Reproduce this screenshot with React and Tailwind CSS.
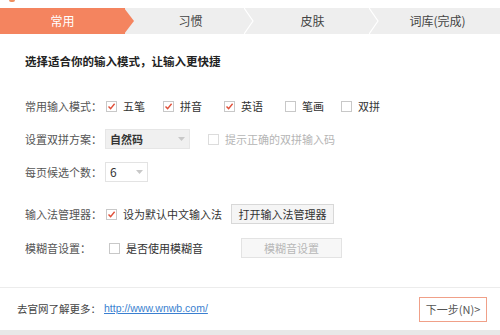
import React from "react";

const font = { fontFamily: '"Noto Sans CJK SC", "Liberation Sans", sans-serif' };

function Box({ checked, disabled }) {
  return (
    <span
      className={`inline-flex items-center justify-center w-[11px] h-[11px] border bg-white ${
        disabled ? "border-[#dcdcdc]" : "border-[#c8c8c8]"
      }`}
    >
      {checked && (
        <svg width="9" height="9" viewBox="0 0 9 9">
          <path d="M1.5 4.5 L3.6 6.6 L7.6 1.8" fill="none" stroke="#e0503a" strokeWidth="1.4" />
        </svg>
      )}
    </span>
  );
}

function Check({ label, checked, disabled, className = "" }) {
  return (
    <span className={`flex items-center gap-[6px] ${className}`}>
      <Box checked={checked} disabled={disabled} />
      <span className={disabled ? "text-[#b5b5b5]" : "text-[#333]"}>{label}</span>
    </span>
  );
}

function Caret() {
  return (
    <svg width="7" height="4" viewBox="0 0 7 4">
      <path d="M0 0 L3.5 4 L7 0 Z" fill="#c8c8c8" />
    </svg>
  );
}

export default function App() {
  const tabs = ["习惯", "皮肤", "词库(完成)"];

  return (
    <div className="w-[500px] h-[335px] bg-white text-[11px] text-[#333] flex flex-col relative" style={font}>
      {/* scrap of window icon at the top edge */}
      <span className="absolute left-[9px] top-0 w-[6px] h-[2px] bg-[#f09060] rounded-b-[2px]" />

      {/* tab bar */}
      <div className="mt-[8px] h-[26px] flex bg-[#eeeeee]">
        <div className="relative w-[125px] bg-[#f4845f] flex items-center justify-center text-white text-[12px]">
          常用
          <svg className="absolute left-[124px] top-0" width="10" height="26" viewBox="0 0 10 26">
            <path d="M0 0 L10 13 L0 26 Z" fill="#f4845f" />
          </svg>
        </div>
        {tabs.map((t, i) => (
          <div key={t} className="relative w-[125px] flex items-center justify-center text-[#444] text-[12px]">
            <span className={i === 0 ? "ml-[6px]" : ""}>{t}</span>
            {i < 2 && (
              <svg className="absolute right-[-4px] top-0" width="10" height="26" viewBox="0 0 10 26">
                <path d="M0 0 L9 13 L0 26" fill="none" stroke="#ffffff" strokeWidth="1.2" />
              </svg>
            )}
          </div>
        ))}
      </div>

      {/* body */}
      <div className="pl-[25px] flex flex-col">
        <div className="mt-[19px] font-bold text-[11.5px] text-[#222]">选择适合你的输入模式，让输入更快捷</div>

        <div className="mt-[26px] h-[20px] flex items-center">
          <span className="w-[81px] text-[#555]">常用输入模式：</span>
          <Check label="五笔" checked className="w-[57px]" />
          <Check label="拼音" checked className="w-[61px]" />
          <Check label="英语" checked className="w-[61px]" />
          <Check label="笔画" className="w-[56px]" />
          <Check label="双拼" />
        </div>

        <div className="mt-[13px] h-[20px] flex items-center">
          <span className="w-[80px] text-[#555]">设置双拼方案：</span>
          <div className="w-[85px] h-[20px] bg-[#f0f0f0] border border-[#e6e6e6] flex items-center justify-between px-[4px]">
            <span className="font-bold text-[#333]">自然码</span>
            <Caret />
          </div>
          <Check label="提示正确的双拼输入码" disabled className="ml-[18px]" />
        </div>

        <div className="mt-[13px] h-[20px] flex items-center">
          <span className="w-[80px] text-[#555]">每页候选个数：</span>
          <div className="w-[43px] h-[20px] bg-white border border-[#e3e3e3] flex items-center justify-between px-[4px]">
            <span className="text-[#333] text-[12px]">6</span>
            <Caret />
          </div>
        </div>

        <div className="mt-[22px] h-[20px] flex items-center">
          <span className="w-[81px] text-[#555]">输入法管理器：</span>
          <Check label="设为默认中文输入法" checked />
          <button className="ml-[9px] w-[103px] h-[20px] border border-[#d8d8d8] bg-[#f5f5f5] text-[#333] text-[11px]">
            打开输入法管理器
          </button>
        </div>

        <div className="mt-[14px] h-[20px] flex items-center">
          <span className="w-[84px] text-[#555]">模糊音设置：</span>
          <Check label="是否使用模糊音" />
          <button className="ml-[38px] w-[101px] h-[20px] border border-[#e3e3e3] bg-[#f7f7f7] text-[#b8b8b8] text-[11px]">
            模糊音设置
          </button>
        </div>
      </div>

      {/* footer */}
      <div className="mt-auto border-t border-[#ececec] h-[43px] flex items-center justify-between pl-[17px] pr-[13px]">
        <div className="flex items-center text-[10.5px]">
          <span className="text-[#444]">去官网了解更多：</span>
          <a href="#" className="ml-[3px] text-[#3a7fd0] underline" style={{ fontFamily: '"Liberation Sans", sans-serif' }}>
            http://www.wnwb.com/
          </a>
        </div>
        <button className="w-[68px] h-[25px] border border-[#f0a088] bg-white text-[#555] text-[11px]">
          下一步(N)&gt;
        </button>
      </div>
      <div className="h-[5px] bg-[#e8e8e8]" />
    </div>
  );
}
